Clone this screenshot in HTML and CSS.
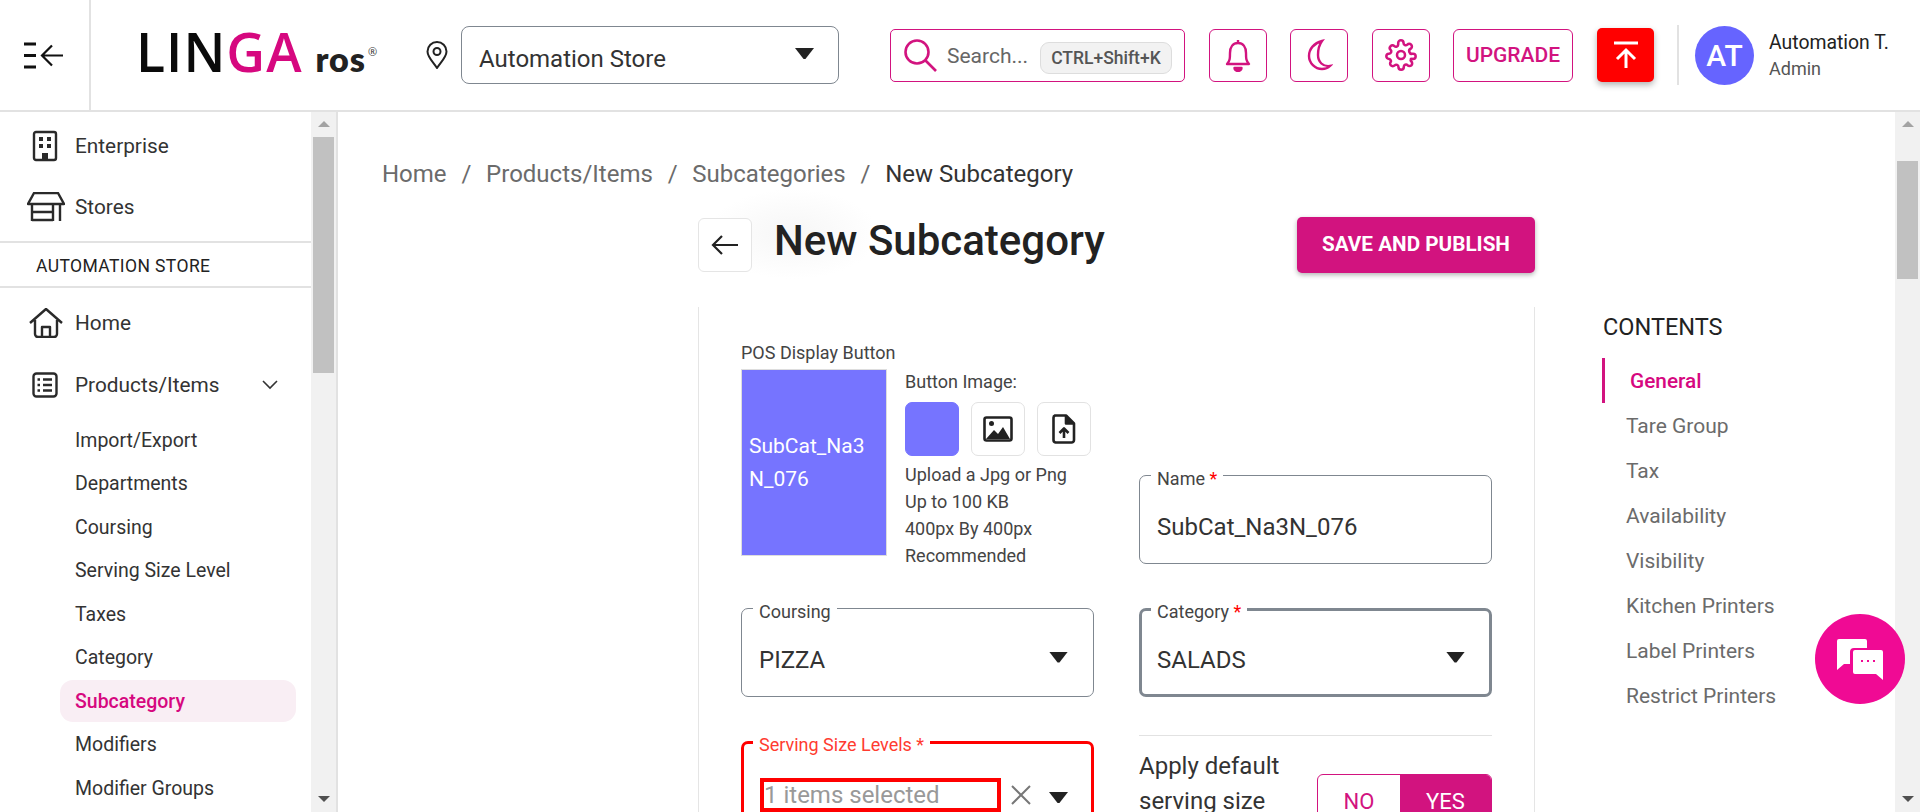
FILE: index.html
```html
<!DOCTYPE html>
<html>
<head>
	<title>New Subcategory</title>
	<link rel="stylesheet" href="styles.css">
</head>
<body>
	<header class="topbar">
		<div class="toggle-cell">
			<svg width="40" height="27" viewBox="0 0 40 27" fill="none" stroke="#111">
				<path d="M0 2h12M0 13.500h12M0 25h12" stroke-width="3"/>
				<path d="M39 13.500H18M28 3.500l-10 10 10 10" stroke-width="2.200"/>
			</svg>
		</div>
		<div class="logo">
			<span class="logo-dark">LIN</span><span class="logo-pink">GA</span>
			<span class="logo-ros">ros</span><span class="logo-reg">®</span>
		</div>
		<svg class="pin" width="22" height="28" viewBox="0 0 22 28" fill="none" stroke="#222" stroke-width="2">
			<path d="M11 27C7 21 1.5 16 1.500 10.500a9.500 9.500 0 0 1 19 0C20.500 16 15 21 11 27z"/>
			<circle cx="11" cy="10.500" r="3.500"/>
		</svg>
		<div class="store-select">
			<span class="store-name">Automation Store</span>
			<i class="caret"></i>
		</div>
		<div class="search">
			<svg width="34" height="34" viewBox="0 0 34 34" fill="none" stroke="#d2137f" stroke-width="2.600">
				<circle cx="14" cy="14" r="11.500"/>
				<path d="M22.500 22.500L33 33"/>
			</svg>
			<span class="search-text">Search...</span>
			<span class="kbd">CTRL+Shift+K</span>
		</div>
		<div class="icon-btn bell">
			<svg width="30" height="34" viewBox="0 0 30 34" fill="none" stroke="#d2137f" stroke-width="2.400" stroke-linejoin="round">
				<path d="M15 2v3M4 26c3-3 3-6 3-11 0-6 3-10 8-10s8 4 8 10c0 5 0 8 3 11z"/>
				<path d="M11.500 30a3.500 3 0 0 0 7 0z" fill="#d2137f"/>
			</svg>
		</div>
		<div class="icon-btn moon">
			<svg width="28" height="32" viewBox="0 0 28 32" fill="none" stroke="#d2137f" stroke-width="2.400">
				<path d="M17 2C9 4 4 10 4 17c0 7 6 13 13 13 3 0 6-1 8-3-7 1-12-4-12-11 0-6 1-10 4-14z"/>
			</svg>
		</div>
		<div class="icon-btn gear">
			<svg width="32" height="34" viewBox="0 0 24 24" fill="none" stroke="#d2137f" stroke-width="1.900" stroke-linejoin="round">
				<circle cx="12" cy="12" r="3"/>
				<path d="M19.400 15a1.650 1.650 0 0 0 .33 1.820l.06.06a2 2 0 1 1-2.830 2.830l-.06-.06a1.650 1.650 0 0 0-2.800 1.170V21a2 2 0 0 1-4 0v-.09a1.650 1.650 0 0 0-2.800-1.170l-.06.06a2 2 0 1 1-2.830-2.830l.06-.06A1.650 1.650 0 0 0 3.090 15H3a2 2 0 0 1 0-4h.09a1.650 1.650 0 0 0 1.170-2.800l-.06-.06a2 2 0 1 1 2.830-2.830l.06.06A1.650 1.650 0 0 0 9.900 4.200V3a2 2 0 0 1 4 0v.09a1.650 1.650 0 0 0 2.800 1.170l.06-.06a2 2 0 1 1 2.830 2.830l-.06.06A1.650 1.650 0 0 0 20.910 11H21a2 2 0 0 1 0 4h-.09a1.650 1.650 0 0 0-1.510 0z"/>
			</svg>
		</div>
		<div class="upgrade">UPGRADE</div>
		<div class="publish-btn">
			<svg width="26" height="28" viewBox="0 0 26 28" fill="none" stroke="#fff" stroke-width="3">
				<path d="M1 2h24M13 27V10M4 18l9-9 9 9"/>
			</svg>
		</div>
		<div class="user">
			<div class="avatar">AT</div>
			<div>
				<div class="user-name">Automation T.</div>
				<div class="user-role">Admin</div>
			</div>
		</div>
	</header>

	<div class="page">
		<aside class="sidebar">
			<nav class="side-nav">
				<a class="nav-item nav-first">
					<svg class="nav-icon" width="26" height="32" viewBox="0 0 26 32" fill="none" stroke="#2a2a2a" stroke-width="2.400" stroke-linejoin="round">
						<rect x="2" y="2" width="22" height="28" rx="2"/>
						<path d="M7 7h4v4H7zM15 7h4v4h-4zM7 14h4v4H7zM15 14h4v4h-4z" fill="#2a2a2a" stroke="none"/>
						<path d="M10 30v-7h6v7" fill="#2a2a2a" stroke="none"/>
					</svg>
					Enterprise
				</a>
				<a class="nav-item nav-stores">
					<svg class="nav-icon" width="38" height="30" viewBox="0 0 38 30" fill="none" stroke="#2a2a2a" stroke-width="2.400" stroke-linejoin="round">
						<path d="M7 1h24l6 11H1zM5 12v17M33 12v17M5 28h21M26 12v17M5 20h21"/>
					</svg>
					Stores
				</a>
				<div class="nav-store-title">AUTOMATION STORE</div>
				<a class="nav-item nav-home">
					<svg class="nav-icon" width="34" height="30" viewBox="0 0 34 30" fill="none" stroke="#2a2a2a" stroke-width="2.400" stroke-linejoin="round">
						<path d="M1 15L17 1l16 14M6 12v14a3 3 0 0 0 3 3h16a3 3 0 0 0 3-3V12M13 29V19h8v10"/>
					</svg>
					Home
				</a>
				<a class="nav-item nav-products">
					<svg class="nav-icon" width="26" height="26" viewBox="0 0 26 26" fill="none" stroke="#2a2a2a" stroke-width="2.400">
						<rect x="1.500" y="1.500" width="23" height="23" rx="3"/>
						<path d="M11 7.500h9M11 13h9M11 18.500h9"/>
						<path d="M5.500 7.500h2.500M5.500 13h2.500M5.500 18.500h2.500" stroke-width="2.600"/>
					</svg>
					Products/Items
					<svg class="nav-chevron" width="16" height="10" viewBox="0 0 16 10" fill="none" stroke="#333" stroke-width="1.600">
						<path d="M1 1l7 7 7-7"/>
					</svg>
				</a>
				<ul class="sub-nav">
					<li>Import/Export</li>
					<li>Departments</li>
					<li>Coursing</li>
					<li>Serving Size Level</li>
					<li>Taxes</li>
					<li>Category</li>
					<li class="active">Subcategory</li>
					<li>Modifiers</li>
					<li>Modifier Groups</li>
				</ul>
			</nav>
			<div class="scrollbar side-scroll">
				<i class="arrow-up"></i>
				<div class="thumb"></div>
				<i class="arrow-down"></i>
			</div>
		</aside>

		<main class="main">
			<div class="breadcrumb">
				<span>Home</span><em>/</em><span>Products/Items</span><em>/</em><span>Subcategories</span><em>/</em><b>New Subcategory</b>
			</div>
			<div class="columns">
				<section class="form-col">
					<div class="title-row">
						<div class="back-btn">
							<svg width="28" height="20" viewBox="0 0 28 20" fill="none" stroke="#222" stroke-width="2.200">
								<path d="M27 10H2M11 1l-9 9 9 9"/>
							</svg>
						</div>
						<h1>New Subcategory</h1>
						<button class="save-btn">SAVE AND PUBLISH</button>
					</div>
					<div class="card">
						<div class="card-grid">
							<div class="pos-block">
								<div class="pos-label">POS Display Button</div>
								<div class="pos-row">
									<div class="pos-preview">SubCat_Na3 N_076</div>
									<div class="pos-side">
										<div class="pos-side-title">Button Image:</div>
										<div class="swatches">
											<div class="swatch swatch-color"></div>
											<div class="swatch">
												<svg width="30" height="26" viewBox="0 0 30 26" fill="none">
													<rect x="1.500" y="1.500" width="27" height="23" rx="2" stroke="#222" stroke-width="2.600"/>
													<circle cx="8.500" cy="7.500" r="2.500" fill="#222"/>
													<path d="M3 23l8-9 4 4 5-7 7 12z" fill="#222"/>
												</svg>
											</div>
											<div class="swatch">
												<svg width="24" height="30" viewBox="0 0 24 30" fill="none" stroke="#222" stroke-width="2.600" stroke-linejoin="round">
													<path d="M3 1.500h11l8 8V26a2.500 2.500 0 0 1-2.500 2.500h-16A2.500 2.500 0 0 1 1.500 26V4A2.500 2.500 0 0 1 3 1.500z"/>
													<path d="M14 1.500v8h8" fill="#222"/>
													<path d="M12 24v-9M7.500 19l4.500-4.500 4.500 4.500"/>
												</svg>
											</div>
										</div>
										<div class="pos-help">
											<div>Upload a Jpg or Png</div>
											<div>Up to 100 KB</div>
											<div>400px By 400px</div>
											<div>Recommended</div>
										</div>
									</div>
								</div>
							</div>

							<div class="field field-name">
								<label class="field-label">Name <span class="req">*</span></label>
								<div class="field-value">SubCat_Na3N_076</div>
							</div>

							<div class="field">
								<label class="field-label">Coursing</label>
								<div class="field-value">PIZZA</div>
								<i class="caret"></i>
							</div>

							<div class="field field-focus">
								<label class="field-label">Category <span class="req">*</span></label>
								<div class="field-value">SALADS</div>
								<i class="caret"></i>
							</div>

							<div class="field field-error">
								<label class="field-label">Serving Size Levels *</label>
								<div class="field-value selected-box">1 items selected</div>
								<svg class="clear-x" width="20" height="20" viewBox="0 0 20 20" fill="none" stroke="#777" stroke-width="2">
									<path d="M1 1l18 18M19 1L1 19"/>
								</svg>
								<i class="caret"></i>
							</div>

							<div class="default-size">
								<div class="default-label">Apply default serving size</div>
								<div class="yes-no">
									<span class="no">NO</span>
									<span class="yes">YES</span>
								</div>
							</div>
						</div>
					</div>
				</section>

				<aside class="contents">
					<div class="contents-title">CONTENTS</div>
					<ul class="contents-list">
						<li class="active">General</li>
						<li>Tare Group</li>
						<li>Tax</li>
						<li>Availability</li>
						<li>Visibility</li>
						<li>Kitchen Printers</li>
						<li>Label Printers</li>
						<li>Restrict Printers</li>
					</ul>
				</aside>
			</div>
		</main>

		<div class="scrollbar main-scroll">
			<i class="arrow-up"></i>
			<div class="thumb"></div>
			<i class="arrow-down"></i>
		</div>
	</div>

	<div class="chat-btn">
		<svg width="48" height="42" viewBox="0 0 48 42" fill="none">
			<path d="M3 1h26a2 2 0 0 1 2 2v7H18a4 4 0 0 0-4 4v12H8l-7 6V3a2 2 0 0 1 2-2z" fill="#fff"/>
			<path d="M19 12h26a2 2 0 0 1 2 2v28l-7-6H19a2 2 0 0 1-2-2V14a2 2 0 0 1 2-2z" fill="#fff"/>
			<path d="M25 23h2M31 23h2M37 23h2" stroke="#f00a94" stroke-width="2"/>
		</svg>
	</div>
</body>
</html>
```

FILE: styles.css
```css
* {
  box-sizing: border-box;
}

html, body {
  height: 100%;
}

body {
  margin: 0;
  overflow: hidden;
  background: #fff;
  color: #222;
  font-family: Roboto, "Liberation Sans", sans-serif;
}

/* top bar */
.topbar {
  display: flex;
  align-items: center;
  height: 112px;
  border-bottom: 2px solid #e2e2e2;
}

.toggle-cell {
  width: 91px;
  height: 110px;
  flex: none;
  display: flex;
  align-items: center;
  padding-left: 24px;
  border-right: 2px solid #e2e2e2;
}

.logo {
  width: 329px;
  flex: none;
  padding-left: 45px;
  font-family: "Open Sans", sans-serif;
  font-size: 53.500px;
  font-weight: 600;
  line-height: 110px;
  letter-spacing: 1px;
  white-space: nowrap;
}

.logo-dark {
  color: #0a0a0a;
}

.logo-pink {
  color: #d6087f;
}

.logo-ros {
  font-family: Lato, sans-serif;
  font-weight: 800;
  font-size: 34px;
  letter-spacing: 1px;
  color: #222;
  margin-left: -2px;
}

.logo-reg {
  font-size: 11px;
  font-weight: 400;
  color: #333;
  letter-spacing: 0;
  vertical-align: 16px;
  margin-left: 2px;
}

.pin {
  flex: none;
  margin-left: 6px;
}

.store-select {
  width: 378px;
  height: 58px;
  flex: none;
  margin-left: 13px;
  display: flex;
  align-items: center;
  justify-content: space-between;
  padding: 0 24px 0 17px;
  border: 1px solid #7f8790;
  border-radius: 8px;
  font-size: 24px;
  color: #333;
}

.store-name {
  padding-top: 8px;
}

.caret {
  display: block;
  width: 19px;
  height: 11px;
  flex: none;
  background: #222;
  clip-path: polygon(0 0, 100% 0, 55% 100%, 45% 100%);
}

.store-select .caret {
  margin-top: -3px;
}

.search {
  width: 295px;
  height: 53px;
  flex: none;
  margin-left: 51px;
  display: flex;
  align-items: center;
  padding-left: 12px;
  border: 1px solid #d2137f;
  border-radius: 5px;
}

.search-text {
  padding-top: 2px;
  font-size: 21px;
  color: #666;
  margin-left: 10px;
}

.kbd {
  height: 32px;
  display: flex;
  align-items: center;
  margin: 5px 0 0 12px;
  padding: 0 10px;
  font-size: 17.500px;
  font-weight: 500;
  color: #555;
  background: #f2f2f2;
  border: 1px solid #ddd;
  border-radius: 9px;
  white-space: nowrap;
}

.icon-btn {
  width: 58px;
  height: 53px;
  flex: none;
  margin-left: 23px;
  display: flex;
  align-items: center;
  justify-content: center;
  border: 1px solid #d2137f;
  border-radius: 6px;
}

.bell {
  margin-left: 24px;
}

.gear {
  margin-left: 24px;
}

.upgrade {
  width: 120px;
  height: 53px;
  flex: none;
  margin-left: 23px;
  display: flex;
  align-items: center;
  justify-content: center;
  font-size: 21px;
  font-weight: 500;
  color: #d2137f;
  border: 1px solid #d2137f;
  border-radius: 6px;
}

.publish-btn {
  width: 57px;
  height: 54px;
  flex: none;
  margin-left: 24px;
  display: flex;
  align-items: center;
  justify-content: center;
  background: #ff0000;
  border-radius: 5px;
  box-shadow: 0 3px 6px rgba(0,0,0,0.3);
}

.user {
  display: flex;
  align-items: center;
  gap: 15px;
  height: 60px;
  flex: none;
  margin-left: 23px;
  padding-left: 16px;
  border-left: 2px solid #e2e2e2;
}

.avatar {
  width: 59px;
  height: 59px;
  display: flex;
  align-items: center;
  justify-content: center;
  border-radius: 50%;
  background: #6664ff;
  color: #fff;
  font-size: 30px;
  font-weight: 500;
}

.user-name {
  font-size: 19.400px;
  color: #222;
  margin-bottom: 4px;
}

.user-role {
  font-size: 18px;
  color: #555;
}

/* page body */
.page {
  display: flex;
  height: 700px;
}

.sidebar {
  width: 338px;
  flex: none;
  display: flex;
  border-right: 2px solid #e2e2e2;
}

.side-nav {
  flex: 1;
}

.nav-item {
  position: relative;
  display: flex;
  align-items: center;
  padding-left: 75px;
  font-size: 20.800px;
  color: #333;
}

.nav-icon {
  position: absolute;
  left: 30px;
}

.nav-first {
  height: 62px;
  margin-top: 3px;
}

.nav-first .nav-icon {
  left: 32px;
}

.nav-stores {
  height: 60px;
  margin-bottom: 4px;
}

.nav-stores .nav-icon {
  left: 27px;
}

.nav-store-title {
  height: 47px;
  display: flex;
  align-items: center;
  padding: 2px 0 0 36px;
  font-size: 17.500px;
  letter-spacing: 0.4px;
  color: #222;
  border-top: 2px solid #e2e2e2;
  border-bottom: 2px solid #e2e2e2;
}

.nav-home {
  height: 70px;
}

.nav-home .nav-icon {
  left: 29px;
}

.nav-products {
  height: 54px;
}

.nav-products .nav-icon {
  left: 32px;
}

.nav-chevron {
  position: absolute;
  left: 262px;
}

.sub-nav {
  list-style: none;
  margin: 6.500px 0 0;
  padding: 0;
}

.sub-nav li {
  height: 43.500px;
  display: flex;
  align-items: center;
  margin-left: 60px;
  width: 236px;
  padding-left: 15px;
  font-size: 19.500px;
  color: #333;
  border-radius: 13px;
}

.sub-nav li.active {
  height: 42px;
  margin-top: 0.750px;
  margin-bottom: 0.750px;
  color: #d6087f;
  font-weight: 500;
  background: #f9eef4;
}

.scrollbar {
  position: relative;
  width: 25px;
  flex: none;
  background: #f1f1f1;
  padding: 25px 2px 0;
}

.scrollbar .thumb {
  background: #c1c1c1;
}

.side-scroll .thumb {
  height: 236px;
}

.main-scroll {
  margin-left: auto;
}

.main-scroll .thumb {
  height: 118px;
  margin-top: 24px;
}

.arrow-up, .arrow-down {
  position: absolute;
  left: 7px;
  width: 0;
  height: 0;
  border-left: 6px solid transparent;
  border-right: 6px solid transparent;
}

.arrow-up {
  top: 9px;
  border-bottom: 6px solid #a3a3a3;
}

.arrow-down {
  bottom: 10px;
  border-top: 6px solid #505050;
}

/* main area */
.main {
  flex: 1;
  min-width: 0;
  overflow: hidden;
  padding: 47px 0 0 44px;
}

.breadcrumb {
  display: flex;
  align-items: center;
  height: 30px;
  font-size: 24px;
  color: #6b6b6b;
  white-space: nowrap;
}

.breadcrumb em {
  font-style: normal;
  margin: 0 14.800px;
}

.breadcrumb b {
  font-weight: 400;
  color: #333;
}

.columns {
  display: flex;
  padding-left: 316px;
}

.form-col {
  position: relative;
  width: 837px;
  flex: none;
}

/* faint smudge behind the back button */
.form-col::before {
  content: "";
  position: absolute;
  z-index: -1;
  left: 10px;
  top: 0;
  width: 170px;
  height: 90px;
  background: radial-gradient(closest-side, #f6f6f6, #fff);
}

.title-row {
  display: flex;
  align-items: center;
  height: 55px;
  margin-top: 28px;
}

.back-btn {
  width: 54px;
  height: 54px;
  flex: none;
  display: flex;
  align-items: center;
  justify-content: center;
  background: #fff;
  border: 1px solid #e5e5e5;
  border-radius: 6px;
}

.title-row h1 {
  margin: 0 0 0 22px;
  padding-bottom: 8px;
  font-size: 42px;
  font-weight: 500;
  color: #222;
}

.save-btn {
  width: 238px;
  height: 56px;
  margin-left: auto;
  padding: 0 0 2px;
  border: none;
  border-radius: 5px;
  background: #d2137f;
  color: #fff;
  font-family: inherit;
  font-size: 20.700px;
  font-weight: 700;
  box-shadow: 0 2px 5px rgba(0,0,0,0.3);
}

.card {
  height: 520px;
  margin-top: 35px;
  padding: 33px 42px 0;
  background: #fff;
  border-left: 1px solid #e5e5e5;
  border-right: 1px solid #e5e5e5;
}

.card-grid {
  display: grid;
  grid-template-columns: 353px 353px;
  column-gap: 45px;
  grid-template-rows: auto auto auto;
}

.pos-block {
  height: 268px;
}

.pos-label {
  height: 28px;
  font-size: 18px;
  line-height: 26px;
  color: #444;
}

.pos-row {
  display: flex;
  gap: 18px;
  margin-top: 1px;
}

.pos-preview {
  width: 146px;
  height: 187px;
  flex: none;
  display: flex;
  align-items: center;
  padding: 1px 7px 0;
  background: #7674ff;
  border: 1px solid #ddd;
  color: #fff;
  font-size: 21px;
  line-height: 33px;
  word-break: break-all;
}

.pos-side-title {
  margin-top: 2px;
  font-size: 18px;
  line-height: 22px;
  color: #444;
}

.swatches {
  display: flex;
  gap: 12px;
  margin-top: 9px;
}

.swatch {
  width: 54px;
  height: 54px;
  display: flex;
  align-items: center;
  justify-content: center;
  border: 1px solid #e2e2e2;
  border-radius: 7px;
}

.swatch-color {
  background: #7674ff;
  border-color: #7674ff;
}

.pos-help {
  margin-top: 5px;
  font-size: 18px;
  line-height: 27px;
  color: #444;
}

.field {
  position: relative;
  height: 89px;
  margin-bottom: 44px;
  border: 1px solid #7f8790;
  border-radius: 7px;
  display: flex;
  align-items: center;
  padding: 15px 17px 0;
}

.field-name {
  align-self: end;
  margin-bottom: 44px;
}

.field-label {
  position: absolute;
  top: -7px;
  left: 11px;
  padding: 0 6px;
  background: #fff;
  font-size: 18px;
  line-height: 20px;
  color: #444;
}

.req {
  color: #ff0000;
}

.field-value {
  flex: 1;
  font-size: 24px;
  color: #333;
}

.field .caret {
  margin-right: 8px;
  margin-top: -6px;
}

.field-focus {
  border: 3px solid #7f8790;
}

.field-focus .field-label {
  left: 9px;
  top: -9px;
}

.field-focus .caret {
  margin-right: 7px;
}

.field-focus .field-value {
  margin-left: -2px;
}

.field-error {
  border: 3px solid #ff0000;
  height: 100px;
  align-items: flex-start;
  padding: 34px 8px 0 16px;
}

.field-error .field-label {
  left: 9px;
  top: -9px;
  color: #ff3b30;
}

.selected-box {
  flex: 0 0 241px;
  height: 34px;
  line-height: 27px;
  border: 4px solid #ff0000;
  color: #999;
  white-space: nowrap;
}

.clear-x {
  flex: none;
  margin: 7px 18px 0 10px;
}

.field-error .caret {
  margin: 14px 8px 0 0;
}

.default-size {
  display: flex;
  justify-content: space-between;
  margin-top: -6px;
  padding-top: 13px;
  border-top: 1px solid #e2e2e2;
  height: 100px;
}

.default-label {
  width: 170px;
  font-size: 24px;
  line-height: 35px;
  color: #333;
}

.yes-no {
  display: flex;
  width: 175px;
  height: 64px;
  margin-top: 25px;
  border: 1px solid #d2137f;
  border-radius: 6px;
  overflow: hidden;
  font-size: 22px;
}

.yes-no span {
  display: flex;
  align-items: center;
  justify-content: center;
  padding-bottom: 10px;
}

.no {
  flex: 0 0 82px;
  color: #d2137f;
}

.yes {
  flex: 1;
  color: #fff;
  background: #d2137f;
}

/* contents list */
.contents {
  margin-left: 68px;
  padding-top: 123px;
}

.contents-title {
  height: 30px;
  line-height: 30px;
  font-size: 23.500px;
  color: #222;
}

.contents-list {
  list-style: none;
  margin: 16px 0 0 -1px;
  padding: 0;
}

.contents-list li {
  height: 45px;
  display: flex;
  align-items: center;
  padding-left: 24px;
  font-size: 21px;
  color: #6b6b6b;
  white-space: nowrap;
}

.contents-list li.active {
  padding-left: 25px;
  color: #d6087f;
  font-size: 20.800px;
  font-weight: 500;
  border-left: 3px solid #d2137f;
}

/* chat bubble sits over the scrollbar */
.chat-btn {
  position: fixed;
  left: 1815px;
  top: 614px;
  width: 90px;
  height: 90px;
  display: flex;
  align-items: center;
  justify-content: center;
  border-radius: 50%;
  background: #f00a94;
}
```
